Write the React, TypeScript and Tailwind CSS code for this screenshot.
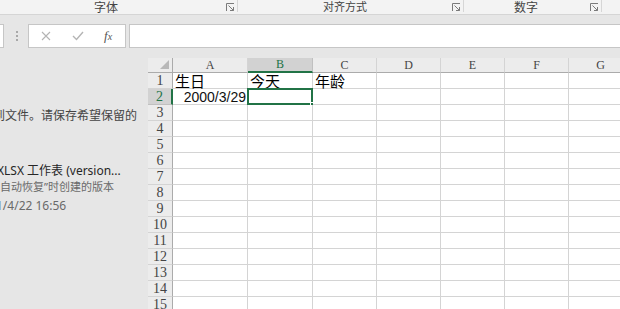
import React from "react";

const CJK = { fontFamily: '"Noto Sans", "Noto Sans CJK SC", sans-serif' };
const CELL = { fontFamily: '"Liberation Sans", "Noto Sans CJK SC", sans-serif' };
const CELLCJK = { fontFamily: '"Noto Sans CJK SC", sans-serif' };
const HEAD = { fontFamily: '"Liberation Serif", "Noto Sans CJK SC", serif' };

function Launcher() {
  return (
    <svg width="9" height="9" viewBox="0 0 9 9" fill="none" stroke="#7a7a7a" strokeWidth="1">
      <path d="M0.5 8 V0.5 H8" />
      <path d="M2.5 2.5 L7.5 7.5" />
      <path d="M7.5 4 V7.5 H4" />
    </svg>
  );
}

const colWidths = [75, 65, 64, 64, 64, 64, 64];
const cols = ["A", "B", "C", "D", "E", "F", "G"];
const rows = Array.from({ length: 15 }, (_, i) => i + 1);

export default function App() {
  return (
    <div className="w-[620px] h-[309px] overflow-hidden bg-[#e6e6e6] flex flex-col" style={CJK}>
      {/* ribbon group labels */}
      <div className="h-[14px] bg-[#f3f3f3] flex text-[12px] leading-[13px] text-[#444] shrink-0 overflow-hidden" style={{ fontFamily: '"Noto Sans CJK SC", sans-serif' }}>
        <div className="w-[238px] flex items-start border-r border-[#d6d6d6] h-[12px] shrink-0">
          <span className="ml-[94px]">字体</span>
          <span className="ml-auto mr-[2px] mt-[3px]"><Launcher /></span>
        </div>
        <div className="w-[226px] flex items-start border-r border-[#d6d6d6] h-[12px] shrink-0">
          <span className="ml-[85px] text-[11px]">对齐方式</span>
          <span className="ml-auto mr-[2px] mt-[3px]"><Launcher /></span>
        </div>
        <div className="w-[138px] flex items-start border-r border-[#d6d6d6] h-[12px] shrink-0">
          <span className="ml-[50px]">数字</span>
          <span className="ml-auto mr-[2px] mt-[3px]"><Launcher /></span>
        </div>
      </div>
      {/* band */}
      <div className="h-[10px] border-t border-[#d5d5d5] bg-[#e6e6e6] shrink-0" />
      {/* formula bar */}
      <div className="h-[24px] flex items-stretch shrink-0">
        <div className="w-[4px] bg-white border border-l-0 border-[#c6c6c6]" />
        <div className="w-[24px] flex flex-col items-center justify-center gap-[2px] pl-[2px]">
          <div className="w-[2px] h-[2px] bg-[#a8a8a8]" />
          <div className="w-[2px] h-[2px] bg-[#a8a8a8]" />
          <div className="w-[2px] h-[2px] bg-[#a8a8a8]" />
        </div>
        <div className="w-[98px] bg-white border border-[#c6c6c6] flex items-center">
          <svg className="ml-[12px]" width="10" height="10" viewBox="0 0 10 10" stroke="#b4b4b4" strokeWidth="1.1">
            <path d="M1 1 L9 9 M9 1 L1 9" />
          </svg>
          <svg className="ml-[21px]" width="12" height="10" viewBox="0 0 12 10" fill="none" stroke="#b4b4b4" strokeWidth="1.4">
            <path d="M1 5 L4.5 8.5 L11 1" />
          </svg>
          <span className="ml-[20px] italic text-[13px] text-[#555]" style={HEAD}>f<span className="text-[10px]">x</span></span>
        </div>
        <div className="ml-[3px] flex-1 bg-white border border-r-0 border-[#c6c6c6]" />
      </div>
      {/* main */}
      <div className="flex flex-1 min-h-0">
        {/* left panel */}
        <div className="w-[148px] shrink-0 overflow-hidden relative text-[12px] leading-[16px]">
          <div className="mt-[59px] -ml-[7px] whitespace-nowrap text-[#444]" style={{ fontFamily: '"Noto Sans CJK SC", sans-serif' }}>到文件。请保存希望保留的</div>
          <div className="mt-[40px] -ml-[3px] whitespace-nowrap text-[#262626]">XLSX 工作表 (version...</div>
          <div className="mt-[0px] whitespace-nowrap text-[#6a6a6a] text-[11px]">自动恢复”时创建的版本</div>
          <div className="mt-[3px] -ml-[4px] whitespace-nowrap text-[#6a6a6a]">1/4/22 16:56</div>
        </div>
        {/* grid */}
        <div className="flex-1 pt-[10px] overflow-hidden">
          <div className="w-[600px]">
            {/* header row */}
            <div className="flex h-[15px]">
              <div className="w-[25px] shrink-0 bg-[#ececec] border-r border-b border-[#ababab] relative">
                <svg className="absolute right-[3px] bottom-[3px]" width="9" height="9" viewBox="0 0 9 9">
                  <path d="M9 0 L9 9 L0 9 Z" fill="#b8b8b8" />
                </svg>
              </div>
              {cols.map((c, i) => {
                const sel = c === "B";
                return (
                  <div
                    key={c}
                    style={{ width: colWidths[i], ...HEAD }}
                    className={
                      sel
                        ? "shrink-0 bg-[#d2d2d2] border-r border-[#c0c0c0] border-b-2 border-b-[#217346] text-[#217346] text-[12px] leading-[13px] text-center"
                        : "shrink-0 bg-[#ececec] border-r border-[#d4d4d4] border-b border-b-[#ababab] text-[#444] text-[12px] leading-[14px] text-center"
                    }
                  >
                    {c}
                  </div>
                );
              })}
            </div>
            {rows.map((r) => {
              const selRow = r === 2;
              return (
                <div key={r} className="flex h-[16px]">
                  <div
                    style={HEAD}
                    className={
                      selRow
                        ? "w-[25px] shrink-0 bg-[#d2d2d2] border-r-2 border-r-[#217346] border-b border-b-[#c0c0c0] text-[#217346] text-[14px] leading-[15px] text-center"
                        : "w-[25px] shrink-0 bg-[#ececec] border-r border-r-[#ababab] border-b border-b-[#d4d4d4] text-[#444] text-[14px] leading-[15px] text-center"
                    }
                  >
                    {r}
                  </div>
                  {cols.map((c, i) => {
                    let content: React.ReactNode = null;
                    let align = "text-left pl-[2px]";
                    const cjk = (t: string) => (
                      <span className="block text-[15px] leading-[15px] text-black" style={CELLCJK}>{t}</span>
                    );
                    if (r === 1 && c === "A") content = cjk("生日");
                    if (r === 1 && c === "B") content = cjk("今天");
                    if (r === 1 && c === "C") content = cjk("年龄");
                    if (r === 2 && c === "A") {
                      content = "2000/3/29";
                      align = "text-right pr-[1px]";
                    }
                    const sel = r === 2 && c === "B";
                    return (
                      <div
                        key={c}
                        style={{ width: colWidths[i], ...CELL }}
                        className={`shrink-0 bg-white border-r border-b border-[#d4d4d4] text-[14px] leading-[16px] text-[#111] whitespace-nowrap relative ${align}`}
                      >
                        {content}
                        {sel && (
                          <>
                            <div className="absolute -left-[1px] -top-[1px] w-[66px] h-[17px] border-2 border-[#217346]" />
                            <div className="absolute -right-[4px] -bottom-[4px] w-[6px] h-[6px] bg-[#217346] border border-white" />
                          </>
                        )}
                      </div>
                    );
                  })}
                </div>
              );
            })}
          </div>
        </div>
      </div>
    </div>
  );
}
